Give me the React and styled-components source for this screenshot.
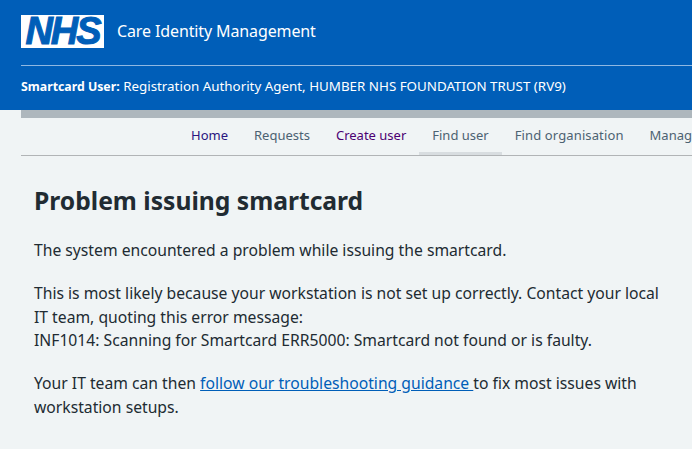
import React from 'react';
import styled, { createGlobalStyle } from 'styled-components';

const GlobalStyle = createGlobalStyle`
    html, body {
        margin: 0;
        padding: 0;
        background-color: #f0f4f5;
        overflow: hidden;
    }
    body {
        font-family: "Noto Sans", "Open Sans", sans-serif;
        color: #212b32;
    }
`;

const Page = styled.div`
    width: 692px;
    height: 449px;
    overflow: hidden;
`;

const Header = styled.header`
    background-color: #005eb8;
    height: 110px;
    padding: 15px 0 0 21px;
    box-sizing: border-box;
    color: #fff;
`;

const Brand = styled.div`
    display: flex;
    align-items: center;
    gap: 13px;
    height: 33px;
`;

const Logo = styled.span`
    display: flex;
    align-items: center;
    justify-content: center;
    width: 83px;
    height: 33px;
    background-color: #fff;
    color: #005eb8;
    font-family: "Liberation Sans", sans-serif;
    font-size: 38px;
    font-style: italic;
    font-weight: 700;
    letter-spacing: -2px;
    -webkit-text-stroke: 1px #005eb8;
`;

const ServiceName = styled.span`
    font-size: 16px;
    letter-spacing: -0.12px;
    margin-top: -2px;
`;

const UserRow = styled.div`
    margin-top: 17px;
    padding-top: 12px;
    border-top: 1px solid #8fb8e2;
    font-size: 13.36px;
    line-height: 17px;
    white-space: nowrap;
`;

const UserLabel = styled.strong`
    font-size: 12.3px;
    font-weight: 700;
`;

const Main = styled.div`
    padding-left: 21px;
`;

const GreyBar = styled.div`
    height: 8px;
    background-color: #aeb7bd;
`;

const Nav = styled.nav`
    display: flex;
    height: 38px;
    box-sizing: border-box;
    padding-left: 157px;
    border-bottom: 1px solid #b1b4b6;
    overflow: hidden;
    white-space: nowrap;
`;

const NavItem = styled.a`
    display: block;
    box-sizing: border-box;
    height: 37px;
    padding: 8px 13px 0;
    font-size: 13px;
    line-height: 18px;
    color: ${(p) => p.$color || '#4c6272'};
    border-bottom: 3px solid ${(p) => (p.$active ? '#d8dde0' : 'transparent')};
`;

const WideNavItem = styled(NavItem)`
    letter-spacing: 0.12px;
`;

const Content = styled.main`
    padding: 27px 0 0 13px;
`;

const Title = styled.h1`
    margin: 0 0 20px;
    font-size: 24.65px;
    line-height: 36px;
    font-weight: 700;
`;

const Para = styled.p`
    margin: 0 0 19.5px;
    font-size: 15.7px;
    line-height: 23.5px;
    width: 640px;
`;

const Link = styled.a`
    color: #005eb8;
    text-decoration: underline;
`;

const App = () => {
    return (
        <Page>
            <GlobalStyle />
            <Header>
                <Brand>
                    <Logo>NHS</Logo>
                    <ServiceName>Care Identity Management</ServiceName>
                </Brand>
                <UserRow>
                    <UserLabel>Smartcard User:</UserLabel> Registration Authority Agent, HUMBER NHS FOUNDATION TRUST (RV9)
                </UserRow>
            </Header>
            <Main>
                <GreyBar />
                <Nav>
                    <NavItem $color='#2a1480'>Home</NavItem>
                    <NavItem>Requests</NavItem>
                    <NavItem $color='#4c0072'>Create user</NavItem>
                    <NavItem $active>Find user</NavItem>
                    <WideNavItem>Find organisation</WideNavItem>
                    <NavItem>Manage</NavItem>
                </Nav>
                <Content>
                    <Title>Problem issuing smartcard</Title>
                    <Para>The system encountered a problem while issuing the smartcard.</Para>
                    <Para>
                        This is most likely because your workstation is not set up correctly. Contact your local IT team, quoting this error message:
                        <br />
                        INF1014: Scanning for Smartcard ERR5000: Smartcard not found or is faulty.
                    </Para>
                    <Para>
                        Your IT team can then <Link>follow our troubleshooting guidance </Link>to fix most issues with workstation setups.
                    </Para>
                </Content>
            </Main>
        </Page>
    );
};

export default App;
